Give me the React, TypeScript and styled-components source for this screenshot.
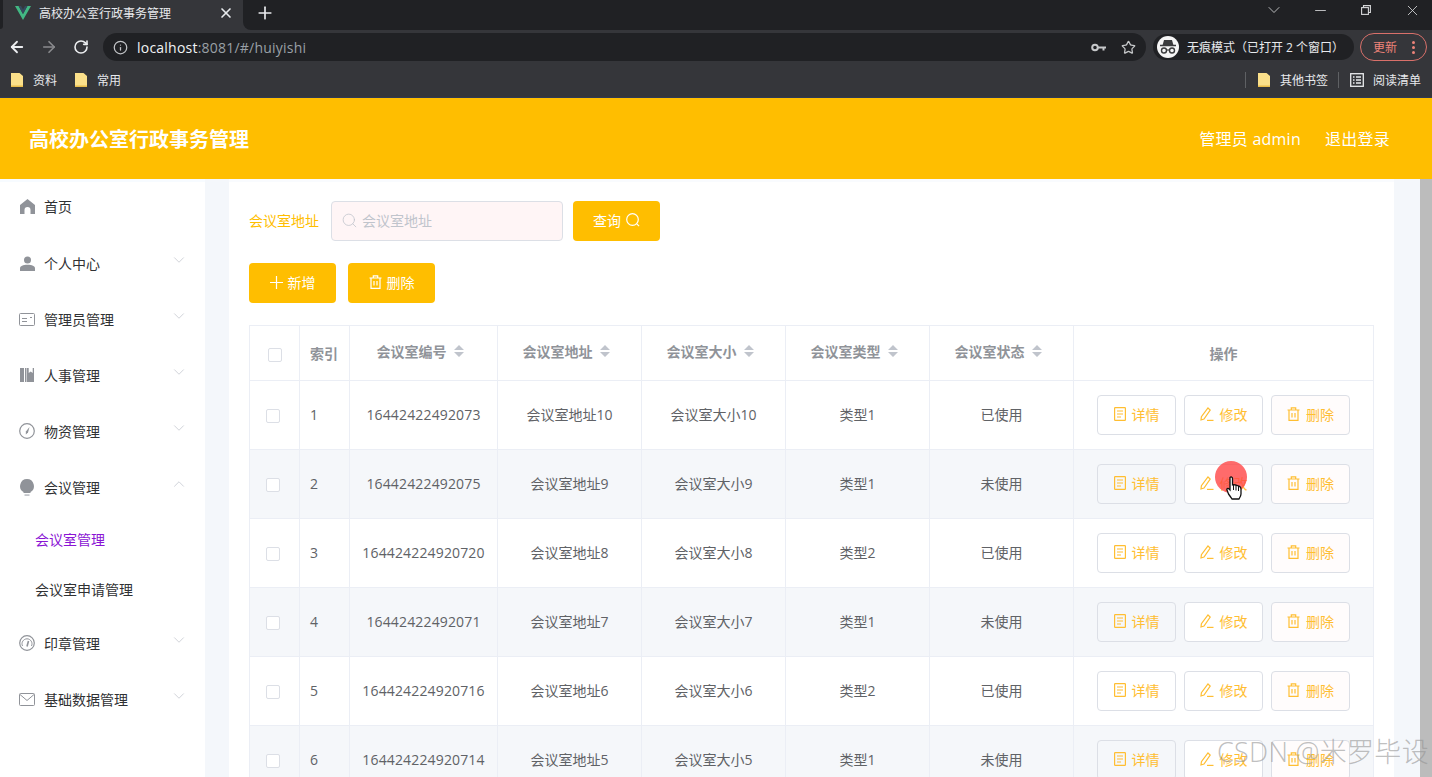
import React from "react";
import styled, { createGlobalStyle } from "styled-components";
import { ArrowLeft, ArrowRight, RotateCw, Info, Star, Plus, X, ChevronDown, ChevronUp, Minus, Search } from "lucide-react";

const Global = createGlobalStyle`
  html, body { margin: 0; padding: 0; height: 100%; overflow: hidden; background: #fff; }
  body { font-family: "Open Sans", "Noto Sans CJK SC", sans-serif; }
  * { box-sizing: border-box; }
`;

const Page = styled.div`
  width: 1432px; height: 777px; position: relative; overflow: hidden;
  display: flex; flex-direction: column;
`;

/* ---------- browser chrome ---------- */
const TabStrip = styled.div`
  height: 31px; background: #35363a; display: flex; align-items: flex-start; flex: none;
`;
const TabEdge = styled.div` width: 3px; height: 29px; background: #202124; border-radius: 0 0 3px 0; flex: none; `;
const Tab = styled.div`
  width: 240px; height: 31px; color: #e8eaed; flex: none;
  display: flex; align-items: center; padding: 0 9px 5px 12px; font-size: 12px; gap: 8px;
`;
const TabTitle = styled.span` flex: 1; white-space: nowrap; `;
const StripRest = styled.div`
  flex: 1; height: 30px; background: #202124; border-radius: 0 0 0 8px; display: flex; align-items: flex-start; min-width: 0;
`;
const NewTab = styled.div` margin: 1px 0 0 10px; height: 24px; width: 24px; display: flex; align-items: center; justify-content: center; color: #e8eaed; `;
const WindowControls = styled.div`
  margin-left: auto; height: 20px; display: flex; align-items: center; color: #d6d7d9; margin-right: -3px;
`;
const WinSlot = styled.span` width: 46px; display: flex; justify-content: center; `;
const Toolbar = styled.div`
  height: 32px; background: #35363a; display: flex; align-items: center; padding-left: 1px; flex: none;
`;
const NavButton = styled.div<{ $dim?: boolean }>`
  width: 32px; display: flex; justify-content: center; color: ${p => (p.$dim ? "#8a8b8e" : "#eceef0")};
`;
const UrlBar = styled.div`
  margin-left: 6px; width: 1043px; height: 28px; background: #202124; border-radius: 14px; display: flex; align-items: center;
  padding: 0 10px 0 10px; color: #c2c4c7; font-size: 14px;
`;
const UrlText = styled.span`
  margin-left: 9px; color: #9aa0a6; font-family: "Open Sans", sans-serif; letter-spacing: 0.22px;
  b { color: #f1f3f4; font-weight: 400; }
`;
const UrlIcons = styled.div` margin-left: auto; display: flex; align-items: center; gap: 15px; color: #c6c8ca; `;
const Profile = styled.div`
  margin-left: 7px; width: 201px; height: 26px; background: #202124; border-radius: 13px; display: flex; align-items: center;
  padding-left: 4px; gap: 8px; color: #e8eaed; font-size: 12px; white-space: nowrap;
`;
const Avatar = styled.div`
  width: 22px; height: 22px; border-radius: 50%; background: #f5f5f5; display: flex; align-items: center; justify-content: center; flex: none;
`;
const UpdateBtn = styled.div`
  margin-left: 6px; width: 67px; height: 28px; border: 1px solid #d9706a; border-radius: 14px; color: #ee8379; font-size: 12px;
  display: flex; align-items: center; padding: 0 11px 0 12px; justify-content: space-between;
`;
const Dots = styled.span`
  display: flex; flex-direction: column; gap: 2px;
  i { display: block; width: 3px; height: 3px; border-radius: 50%; background: #ee8379; }
`;
const Bookmarks = styled.div`
  height: 35px; background: #35363a; display: flex; align-items: center; padding: 0 11px 1px 11px; color: #e8eaed; font-size: 12px; flex: none;
  border-bottom: 1px solid #2f3a55;
`;
const Bookmark = styled.div<{ $end?: string; $gap?: number }>`
  display: flex; align-items: center; gap: ${p => p.$gap ?? 10}px; margin-right: ${p => p.$end ?? "18px"};
`;
const Spacer = styled.div` flex: 1; `;
const BarSep = styled.div<{ $after: number }>` width: 1px; height: 16px; background: #5f6164; margin-right: ${p => p.$after}px; `;

/* ---------- app header ---------- */
const Header = styled.header`
  height: 81px; flex: none; background: #ffbe00; color: #fff; display: flex; align-items: center;
  padding: 0 42px 0 29px; font-size: 16px;
`;
const Brand = styled.h1` margin: 0; font-size: 20px; font-weight: 700; font-family: "Noto Sans CJK SC", sans-serif; `;
const HeaderLink = styled.span` margin-left: 24px; letter-spacing: 0.25px; padding-bottom: 2px; `;

/* ---------- body ---------- */
const Body = styled.div` flex: 1; display: flex; min-height: 0; background: #f4f7fb; `;
const Sidebar = styled.nav` width: 205px; flex: none; background: #fff; border-top: 3px solid #f7fbff; `;
const MenuItem = styled.div<{ $first?: boolean }>`
  height: 56px; display: flex; align-items: center; padding-left: 19px; padding-right: 17px; gap: 9px; color: #303133; font-size: 14px;
  margin-top: ${p => (p.$first ? "-3px" : "0")};
  padding-bottom: ${p => (p.$first ? "2px" : "0")};
  svg.chev { margin-left: auto; color: #c0c4cc; position: relative; top: -3px; }
`;
const MenuIcon = styled.span` width: 16px; height: 16px; display: flex; align-items: center; justify-content: center; color: #909399; flex: none; `;
const SubItem = styled.div<{ $active?: boolean }>`
  height: 50px; display: flex; align-items: center; padding: 0 0 2px 35px; font-size: 14px;
  color: ${p => (p.$active ? "#8a14d4" : "#303133")};
`;
const Main = styled.main` flex: 1; padding: 0 26px 0 24px; min-width: 0; `;
const ScrollTrack = styled.div` width: 12px; flex: none; background: #bcbcbc; `;
const Card = styled.section` background: #fff; height: 100%; padding: 19px 20px 0; overflow: hidden; border-top: 3px solid #f9fbfe; `;
const SearchRow = styled.div` display: flex; align-items: center; height: 40px; `;
const FieldLabel = styled.label` color: #ffbe00; font-size: 14px; width: 82px; flex: none; padding-bottom: 2px; `;
const SearchBox = styled.div`
  width: 232px; height: 40px; border: 1px solid #dcdfe6; border-radius: 4px; background: #fff5f6; display: flex; align-items: center;
  padding: 0 0 2px 9px; gap: 4px; color: #c0c4cc; font-size: 14px; margin-right: 10px;
`;
const Btn = styled.button`
  width: 87px; height: 40px; border: 0; border-radius: 4px; background: #ffbe00; color: #fff; font: inherit; font-size: 14px;
  display: flex; align-items: center; justify-content: center; gap: 5px; padding: 0 0 2px;
`;
const ActionRow = styled.div` display: flex; gap: 12px; margin: 22px 0; `;

const Table = styled.table`
  border-collapse: collapse; table-layout: fixed; width: 1124px; font-size: 14px;
  border-top: 1px solid #ebeef5; border-left: 1px solid #ebeef5;
  th, td { border-right: 1px solid #ebeef5; border-bottom: 1px solid #ebeef5; padding: 0; text-align: center; }
`;
const HeadCell = styled.th<{ $left?: boolean }>`
  height: 55px; color: #909399; font-weight: 700; font-size: 14px; font-family: "Noto Sans CJK SC", sans-serif;
  text-align: ${p => (p.$left ? "left" : "center")} !important;
  padding-left: ${p => (p.$left ? "10px" : "0")} !important;
`;
const HeadInner = styled.span` display: inline-flex; align-items: center; gap: 7px; margin-right: 7px; position: relative; top: -2px; `;
const Row = styled.tr<{ $striped: boolean }>`
  background: ${p => (p.$striped ? "#f5f7fa" : "#fff")};
`;
const Cell = styled.td<{ $left?: boolean }>`
  height: 69px; color: #606266; text-align: ${p => (p.$left ? "left" : "center")} !important;
  padding: 0 0 2px ${p => (p.$left ? "10px" : "0")} !important;
`;
const CodeText = styled.span` letter-spacing: 0.15px; `;
const Check = styled.span<{ $body?: boolean }>`
  display: inline-block; width: 14px; height: 14px; border: 1px solid #dcdfe6; border-radius: 2px; background: #fff; vertical-align: middle;
  margin-right: ${p => (p.$body ? "3px" : "0")};
`;
const OpWrap = styled.div` display: flex; justify-content: center; gap: 8px; margin-top: 2px; `;
const OpBtn = styled.button<{ $bg: string }>`
  width: 79px; height: 40px; border: 1px solid #dcdfe6; border-radius: 4px; background: ${p => p.$bg}; color: #ffbe32; font: inherit; font-size: 14px;
  display: flex; align-items: center; justify-content: center; gap: 6px; padding: 0 0 2px;
`;

/* ---------- overlays ---------- */
const Ripple = styled.div`
  position: absolute; left: 1215px; top: 461px; width: 32px; height: 32px; border-radius: 50%; background: rgba(255, 70, 70, 0.8);
`;
const Pointer = styled.svg` position: absolute; left: 1226px; top: 476px; `;
const Watermark = styled.div`
  position: absolute; left: 1217px; top: 731px; font-size: 27px; color: rgba(150, 150, 150, 0.62); white-space: nowrap;
  font-family: "Open Sans", "Noto Sans CJK SC", sans-serif; font-weight: 300; letter-spacing: 0.3px;
`;

/* ---------- drawings ---------- */
const Folder = () => (
  <svg width="12" height="14" viewBox="0 0 12 14">
    <path d="M0 0h8.5L12 3v11H0z" fill="#fbe08a" />
    <path d="M0 12.5h12V14H0z" fill="#e9bd4a" />
  </svg>
);
const VueLogo = () => (
  <svg width="16" height="14" viewBox="0 0 16 14">
    <path d="M0 0h3.6L8 8 12.4 0H16L8 14z" fill="#42b883" />
    <path d="M3.600 0h2.400L8 3.600 10 0h2.400L8 8z" fill="#35495e" />
  </svg>
);
const KeyIcon = () => (
  <svg width="15" height="9" viewBox="0 0 15 9" fill="none">
    <circle cx="4" cy="4.500" r="2.800" stroke="currentColor" strokeWidth="2" />
    <path d="M7 3.500h8v2h-1.500v2h-2v-2H7z" fill="currentColor" />
  </svg>
);
const Incognito = () => (
  <svg width="18" height="16" viewBox="0 0 18 16" fill="none">
    <path d="M5 1h8l1.400 5H3.600z" fill="#3a3b3d" />
    <path d="M1 6.500h16" stroke="#3a3b3d" strokeWidth="1.500" />
    <circle cx="5" cy="11.500" r="2.500" stroke="#3a3b3d" strokeWidth="1.400" />
    <circle cx="13" cy="11.500" r="2.500" stroke="#3a3b3d" strokeWidth="1.400" />
    <path d="M7.500 11h3" stroke="#3a3b3d" strokeWidth="1.200" />
  </svg>
);
const ReadList = () => (
  <svg width="14" height="14" viewBox="0 0 14 14" fill="none" stroke="#e8eaed" strokeWidth="1.300">
    <rect x=".7" y=".7" width="12.600" height="12.600" />
    <path d="M3 4h1.500M3 7h1.500M3 10h1.500M6 4h5M6 7h5M6 10h5" />
  </svg>
);
const RestoreIcon = () => (
  <svg width="10" height="10" viewBox="0 0 10 10" fill="none" stroke="currentColor" strokeWidth="1.100">
    <rect x=".6" y="2.600" width="6.800" height="6.800" />
    <path d="M2.500 2.500V.6h6.900v6.900H7.500" />
  </svg>
);
const HomeIcon = () => (
  <svg width="15" height="15" viewBox="0 0 15 15"><path d="M7.500 0 15 6v9h-4.500v-4a3 3 0 0 0-6 0v4H0V6z" fill="currentColor" /></svg>
);
const UserIcon = () => (
  <svg width="15" height="15" viewBox="0 0 15 15"><circle cx="7.500" cy="4" r="3.500" fill="currentColor" /><path d="M0 15v-2.500C0 10 3 8.800 7.500 8.800S15 10 15 12.500V15z" fill="currentColor" /></svg>
);
const CardIcon = () => (
  <svg width="16" height="13" viewBox="0 0 16 13" fill="none" stroke="currentColor">
    <rect x=".5" y=".5" width="15" height="12" rx="1" />
    <path d="M3 5.500h5M3 8.500h5M11 4.500h2" />
  </svg>
);
const BooksIcon = () => (
  <svg width="14" height="14" viewBox="0 0 14 14"><path d="M0 0h4v14H0zM5 0h1.500v14H5zM7 0h1.700v5l2-1.600 2 1.600V0H14v14H7z" fill="currentColor" /></svg>
);
const CompassIcon = () => (
  <svg width="16" height="16" viewBox="0 0 16 16" fill="none"><circle cx="8" cy="8" r="7.300" stroke="currentColor" strokeWidth="1.200" /><path d="M10.500 4 9 9.500 6.800 11.500 6.900 8.500z" fill="currentColor" /></svg>
);
const BulbIcon = () => (
  <svg width="14" height="17" viewBox="0 0 14 17"><path d="M7 0a7 7 0 0 1 3.500 13v1H3.500v-1A7 7 0 0 1 7 0z" fill="currentColor" /><path d="M4.500 15.200h5V17h-5z" fill="#c5c7cc" /></svg>
);
const GaugeIcon = () => (
  <svg width="16" height="16" viewBox="0 0 16 16" fill="none" stroke="currentColor"><circle cx="8" cy="8" r="7.300" strokeWidth="1.200" /><path d="M3.500 11a5 5 0 1 1 9 0" /><path d="M8 11.500 9.500 6" strokeWidth="1.600" /></svg>
);
const MailIcon = () => (
  <svg width="16" height="13" viewBox="0 0 16 13" fill="none" stroke="currentColor"><rect x=".5" y=".5" width="15" height="12" rx="1" /><path d="m1 1.500 7 6 7-6" /></svg>
);
const DocIcon = () => (
  <svg width="12" height="14" viewBox="0 0 12 14" fill="none" stroke="currentColor" strokeWidth="1.200"><rect x=".6" y=".6" width="10.800" height="12.800" rx=".6" /><path d="M3 4h6M3 7h6M3 10h4" /></svg>
);
const PenIcon = () => (
  <svg width="14" height="14" viewBox="0 0 14 14" fill="none" stroke="currentColor" strokeWidth="1.200"><path d="M8 1 10.200 3 4 12 1 13l.4-3.300z" /><path d="M7 13.400h6.500" /></svg>
);
const BinIcon = () => (
  <svg width="13" height="14" viewBox="0 0 13 14" fill="none" stroke="currentColor" strokeWidth="1.200"><path d="M.5 3h12M4.300 3V.8h4.400V3M2 3v10.400h9V3M5 6v4.500M8 6v4.500" /></svg>
);
const PlusGlyph = () => (
  <svg width="13" height="13" viewBox="0 0 13 13" stroke="currentColor" strokeWidth="1.200"><path d="M6.500 0v13M0 6.500h13" /></svg>
);
const SearchGlyph = () => (
  <svg width="14" height="14" viewBox="0 0 14 14" fill="none" stroke="currentColor" strokeWidth="1.200"><circle cx="6.500" cy="6.500" r="5.800" /><path d="m10.800 10.800 2.300 2.300" /></svg>
);
const SortCaret = () => (
  <svg width="10" height="12" viewBox="0 0 10 12"><path d="M5 0 10 5H0zM5 12 0 7h10z" fill="#c0c4cc" /></svg>
);

const menu: [string, React.ReactNode][] = [
  ["个人中心", <UserIcon />],
  ["管理员管理", <CardIcon />],
  ["人事管理", <BooksIcon />],
  ["物资管理", <CompassIcon />],
];

const rows = [
  ["16442422492073", "会议室地址10", "会议室大小10", "类型1", "已使用"],
  ["16442422492075", "会议室地址9", "会议室大小9", "类型1", "未使用"],
  ["164424224920720", "会议室地址8", "会议室大小8", "类型2", "已使用"],
  ["16442422492071", "会议室地址7", "会议室大小7", "类型1", "未使用"],
  ["164424224920716", "会议室地址6", "会议室大小6", "类型2", "已使用"],
  ["164424224920714", "会议室地址5", "会议室大小5", "类型1", "未使用"],
];

const heads = ["会议室编号", "会议室地址", "会议室大小", "会议室类型", "会议室状态"];

export default function App() {
  return (
    <Page>
      <Global />
      <TabStrip>
        <TabEdge />
        <Tab>
          <VueLogo />
          <TabTitle>高校办公室行政事务管理</TabTitle>
          <X size={16} strokeWidth={2.500} />
        </Tab>
        <StripRest>
          <NewTab><Plus size={20} /></NewTab>
          <WindowControls>
            <WinSlot><ChevronDown size={20} strokeWidth={1} /></WinSlot>
            <WinSlot><Minus size={17} strokeWidth={1.200} /></WinSlot>
            <WinSlot><RestoreIcon /></WinSlot>
            <WinSlot><X size={17} strokeWidth={1.200} /></WinSlot>
          </WindowControls>
        </StripRest>
      </TabStrip>
      <Toolbar>
        <NavButton><ArrowLeft size={18} strokeWidth={2.400} /></NavButton>
        <NavButton $dim><ArrowRight size={18} strokeWidth={2.200} /></NavButton>
        <NavButton><RotateCw size={16} strokeWidth={2.400} /></NavButton>
        <UrlBar>
          <Info size={15} />
          <UrlText><b>localhost</b>:8081/#/huiyishi</UrlText>
          <UrlIcons><KeyIcon /><Star size={15} /></UrlIcons>
        </UrlBar>
        <Profile>
          <Avatar><Incognito /></Avatar>
          无痕模式（已打开 2 个窗口）
        </Profile>
        <UpdateBtn>更新<Dots><i /><i /><i /></Dots></UpdateBtn>
      </Toolbar>
      <Bookmarks>
        <Bookmark><Folder />资料</Bookmark>
        <Bookmark><Folder />常用</Bookmark>
        <Spacer />
        <BarSep $after={12} />
        <Bookmark $end="10px"><Folder />其他书签</Bookmark>
        <BarSep $after={11} />
        <Bookmark $end="0" $gap={9}><ReadList />阅读清单</Bookmark>
      </Bookmarks>

      <Header>
        <Brand>高校办公室行政事务管理</Brand>
        <Spacer />
        <HeaderLink>管理员 admin</HeaderLink>
        <HeaderLink>退出登录</HeaderLink>
      </Header>

      <Body>
        <Sidebar>
          <MenuItem $first><MenuIcon><HomeIcon /></MenuIcon>首页</MenuItem>
          {menu.map(([t, icon]) => (
            <MenuItem key={t}><MenuIcon>{icon}</MenuIcon>{t}<ChevronDown className="chev" size={18} strokeWidth={1} /></MenuItem>
          ))}
          <MenuItem><MenuIcon><BulbIcon /></MenuIcon>会议管理<ChevronUp className="chev" size={18} strokeWidth={1} /></MenuItem>
          <SubItem $active>会议室管理</SubItem>
          <SubItem>会议室申请管理</SubItem>
          <MenuItem><MenuIcon><GaugeIcon /></MenuIcon>印章管理<ChevronDown className="chev" size={18} strokeWidth={1} /></MenuItem>
          <MenuItem><MenuIcon><MailIcon /></MenuIcon>基础数据管理<ChevronDown className="chev" size={18} strokeWidth={1} /></MenuItem>
        </Sidebar>
        <Main>
          <Card>
            <SearchRow>
              <FieldLabel>会议室地址</FieldLabel>
              <SearchBox><Search size={17} strokeWidth={1.100} />会议室地址</SearchBox>
              <Btn>查询<SearchGlyph /></Btn>
            </SearchRow>
            <ActionRow>
              <Btn><PlusGlyph />新增</Btn>
              <Btn><BinIcon />删除</Btn>
            </ActionRow>
            <Table>
              <colgroup>
                <col width={50} /><col width={50} /><col width={148} /><col width={144} /><col width={144} /><col width={144} /><col width={144} /><col width={300} />
              </colgroup>
              <thead>
                <tr>
                  <HeadCell><Check /></HeadCell>
                  <HeadCell $left>索引</HeadCell>
                  {heads.map(h => <HeadCell key={h}><HeadInner>{h}<SortCaret /></HeadInner></HeadCell>)}
                  <HeadCell>操作</HeadCell>
                </tr>
              </thead>
              <tbody>
                {rows.map((r, i) => (
                  <Row key={r[0]} $striped={i % 2 === 1}>
                    <Cell><Check $body /></Cell>
                    <Cell $left>{i + 1}</Cell>
                    {r.map((c, j) => <Cell key={j}>{j === 0 ? <CodeText>{c}</CodeText> : c}</Cell>)}
                    <Cell>
                      <OpWrap>
                        <OpBtn $bg={i % 2 === 1 ? "#f5f7fa" : "#fff"}><DocIcon />详情</OpBtn>
                        <OpBtn $bg="#fff"><PenIcon />修改</OpBtn>
                        <OpBtn $bg="#fffcfc"><BinIcon />删除</OpBtn>
                      </OpWrap>
                    </Cell>
                  </Row>
                ))}
              </tbody>
            </Table>
          </Card>
        </Main>
        <ScrollTrack />
      </Body>

      <Ripple />
      <Pointer width="17" height="26" viewBox="0 0 17 26">
        <path d="M4 1.500c1-1 2.500-.5 2.500 1V9l1-.3 2 .3 2 .5 2 .8c1 .5 1.500 1.500 1.500 3V18c0 2-1 3.500-2 5H6c-1-1.500-2-3-3.500-5L1 14c-.5-1 .5-2 1.500-1.500L4 14z" fill="#fff" stroke="#111" strokeWidth="1.300" />
        <path d="M7.500 9v5M10 9.500v5M12.500 10v5" stroke="#111" strokeWidth="1" fill="none" />
      </Pointer>
      <Watermark>CSDN @米罗毕设</Watermark>
    </Page>
  );
}
